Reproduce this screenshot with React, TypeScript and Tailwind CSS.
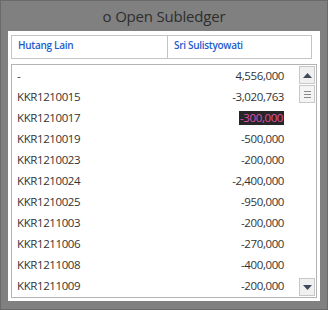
import React from "react";

// ---------- Data ----------
const ROWS: Array<{ code: string; amount: string; selected?: boolean }> = [
    { code: "-", amount: "4,556,000" },
    { code: "KKR1210015", amount: "-3,020,763" },
    { code: "KKR1210017", amount: "-300,000", selected: true },
    { code: "KKR1210019", amount: "-500,000" },
    { code: "KKR1210023", amount: "-200,000" },
    { code: "KKR1210024", amount: "-2,400,000" },
    { code: "KKR1210025", amount: "-950,000" },
    { code: "KKR1211003", amount: "-200,000" },
    { code: "KKR1211006", amount: "-270,000" },
    { code: "KKR1211008", amount: "-400,000" },
    { code: "KKR1211009", amount: "-200,000" },
];

// ---------- Component ----------
export default function App() {
    return (
        <div
            className="w-[328px] h-[310px] bg-[#808080] border border-[#6a6a6a] flex flex-col overflow-hidden"
            style={{ fontFamily: '"Open Sans", "Noto Sans", sans-serif' }}
        >
            <div className="h-[30px] flex items-center justify-center text-[15px] text-[#2e2e2e] tracking-[-0.2px]">
                o Open Subledger
            </div>

            <div className="mx-[7px] h-[270px] bg-white pt-[4px] px-[3px] flex flex-col gap-[5px]">
                {/* header */}
                <div className="h-[24px] mr-[5px] border border-[#c4c4c4] flex text-[10px] font-semibold text-[#1e5ccc] tracking-[-0.3px]">
                    <div className="w-[156px] border-r border-[#c4c4c4] pl-[6px] pt-[2px]">Hutang Lain</div>
                    <div className="flex-1 pl-[6px] pt-[2px]">Sri Sulistyowati</div>
                </div>

                {/* list */}
                <div className="h-[234px] border border-[#b4b4b4] flex">
                    <ul className="flex-1 text-[11.5px] text-[#333] tracking-[-0.4px]">
                        {ROWS.map((r) => (
                            <li key={r.code + r.amount} className="h-[21px] flex items-center justify-between pl-[5px] pr-[15px]">
                                <span>{r.code}</span>
                                {r.selected ? (
                                    <span className="bg-[#262626] text-[#e04fb0] leading-[14px] px-[1px]">{r.amount}</span>
                                ) : (
                                    <span>{r.amount}</span>
                                )}
                            </li>
                        ))}
                    </ul>

                    {/* scrollbar */}
                    <div className="w-[17px] flex flex-col justify-between py-[1px] pr-[1px]">
                        <div className="flex flex-col">
                            <div className="h-[18px] border border-[#c8c8c8] bg-[#f0f0f0] flex items-center justify-center">
                                <svg width="9" height="5" viewBox="0 0 9 5">
                                    <path d="M0 5 L4.5 0 L9 5 Z" fill="#404a5e" />
                                </svg>
                            </div>
                            <div className="h-[18px] mt-[1px] border border-[#c8c8c8] bg-[#f4f4f4] flex flex-col items-center justify-center gap-[2px]">
                                <div className="w-[7px] h-[1px] bg-[#8a8a8a]" />
                                <div className="w-[7px] h-[1px] bg-[#8a8a8a]" />
                                <div className="w-[7px] h-[1px] bg-[#8a8a8a]" />
                            </div>
                        </div>
                        <div className="h-[18px] border border-[#c8c8c8] bg-[#f0f0f0] flex items-center justify-center">
                            <svg width="9" height="5" viewBox="0 0 9 5">
                                <path d="M0 0 L9 0 L4.5 5 Z" fill="#404a5e" />
                            </svg>
                        </div>
                    </div>
                </div>
            </div>
        </div>
    );
}
